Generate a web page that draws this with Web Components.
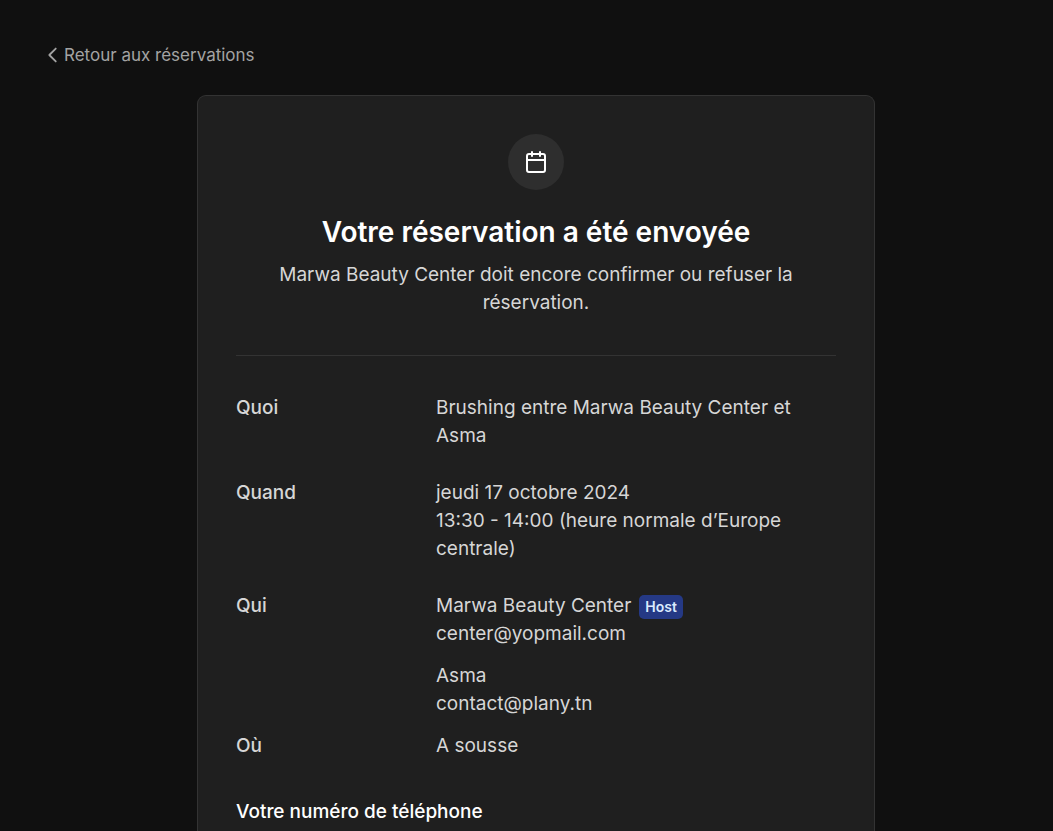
<!DOCTYPE html>
<html lang="fr">
<head>
<meta charset="utf-8">
<meta name="viewport" content="width=device-width, initial-scale=1">
<title>Votre réservation a été envoyée</title>
<style>
  html { background: #101010; }
  body { margin: 0; background: #101010; color: #d6d6d6; font-family: Inter, "Liberation Sans", sans-serif; font-size: 19px; line-height: 28px; }
</style>
</head>
<body>
<booking-page>
  <back-link slot="nav" href="#reservations">Retour aux réservations</back-link>
  <booking-card>
    <booking-status>
      <span slot="title">Votre réservation a été envoyée</span>
      Marwa Beauty Center doit encore confirmer ou refuser la réservation.
    </booking-status>
    <booking-details>
      <detail-row label="Quoi">Brushing entre Marwa Beauty Center et Asma</detail-row>
      <detail-row label="Quand">jeudi 17 octobre 2024<br>13:30 - 14:00 (heure normale d’Europe centrale)</detail-row>
      <detail-row label="Qui" compact>
        <booking-person email="center@yopmail.com">Marwa Beauty Center<role-badge slot="role">Host</role-badge></booking-person>
        <booking-person email="contact@plany.tn">Asma</booking-person>
      </detail-row>
      <detail-row label="Où">A sousse</detail-row>
      <answer-title>Votre numéro de téléphone</answer-title>
    </booking-details>
  </booking-card>
</booking-page>
<script>
  const component = (name, markup, setup) => {
    const template = document.createElement('template');
    template.innerHTML = markup;
    customElements.define(name, class extends HTMLElement {
      constructor() {
        super();
        this.attachShadow({ mode: 'open' }).append(template.content.cloneNode(true));
      }
      connectedCallback() {
        if (setup) setup(this, this.shadowRoot);
      }
    });
  };

  component('booking-page', `
    <style>
      :host { display: flex; flex-direction: column; min-height: 100vh; box-sizing: border-box; padding-top: 41px; }
      nav { padding: 0 48px; margin-bottom: 26px; }
      main { flex: 1; display: flex; justify-content: center; padding: 0 0 0 19px; }
    </style>
    <nav><slot name="nav"></slot></nav>
    <main><slot></slot></main>`);

  component('back-link', `
    <style>
      :host { display: flex; }
      a { display: inline-flex; align-items: center; color: #a3a3a3; font-size: 17px; line-height: 28px; text-decoration: none; }
      svg { width: 22px; height: 22px; margin: 0 0 0 -6px; }
    </style>
    <a><svg viewBox="0 0 24 24" fill="none" stroke="currentColor" stroke-width="2" stroke-linecap="round" stroke-linejoin="round" aria-hidden="true"><path d="M15 19l-7-7 7-7"/></svg><slot></slot></a>`,
    (host, root) => { root.querySelector('a').href = host.getAttribute('href'); });

  component('booking-card', `
    <style>
      :host { display: block; box-sizing: border-box; width: 100%; max-width: 678px; padding: 38px 38px 0; background: #1f1f1f; border: 1px solid #333; border-bottom: 0; border-radius: 9px 9px 0 0; }
    </style>
    <slot></slot>`);

  component('booking-status', `
    <style>
      :host { display: block; text-align: center; }
      .icon { display: flex; align-items: center; justify-content: center; width: 56px; height: 56px; margin: 0 auto; border-radius: 50%; background: #2e2e2e; color: #fff; }
      svg { width: 24px; height: 24px; }
      h1 { margin: 28px 0 15px; color: #fff; font-size: 28px; line-height: 28px; font-weight: 600; }
      p { margin: 0; padding: 0 38px; }
    </style>
    <div class="icon"><svg viewBox="0 0 24 24" fill="none" stroke="currentColor" stroke-width="2" stroke-linecap="round" stroke-linejoin="round" aria-hidden="true"><rect x="3" y="4" width="18" height="18" rx="2"/><path d="M16 2v4M8 2v4M3 10h18"/></svg></div>
    <h1><slot name="title"></slot></h1>
    <p><slot></slot></p>`);

  component('booking-details', `
    <style>
      :host { display: block; margin-top: 38px; padding-top: 38px; border-top: 1px solid #333; }
    </style>
    <slot></slot>`);

  component('detail-row', `
    <style>
      :host { display: grid; grid-template-columns: 1fr 2fr; margin-bottom: 29px; }
      :host([compact]) { margin-bottom: 0; }
      .label { font-weight: 500; }
    </style>
    <div class="label"></div>
    <div><slot></slot></div>`,
    (host, root) => { root.querySelector('.label').textContent = host.getAttribute('label'); });

  component('booking-person', `
    <style>
      :host { display: block; margin-bottom: 14px; }
      .name { display: flex; align-items: center; gap: 8px; height: 28px; }
      .email { margin: 0; }
    </style>
    <div class="name"><span><slot></slot></span><slot name="role"></slot></div>
    <p class="email"></p>`,
    (host, root) => { root.querySelector('.email').textContent = host.getAttribute('email'); });

  component('role-badge', `
    <style>
      :host { display: block; margin-top: 2px; padding: 0 6px; border-radius: 5px; background: #253985; color: #dbeafe; font-size: 14px; line-height: 24px; font-weight: 600; }
    </style>
    <slot></slot>`);

  component('answer-title', `
    <style>
      :host { display: block; margin-top: 38px; }
      h2 { margin: 0; color: #fff; font-size: 19px; line-height: 28px; font-weight: 500; }
    </style>
    <h2><slot></slot></h2>`);
</script>
</body>
</html>
